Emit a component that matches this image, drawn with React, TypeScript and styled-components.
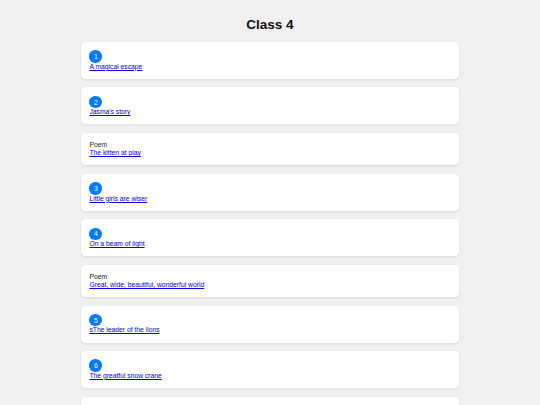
import React from "react";
import styled, { createGlobalStyle } from "styled-components";

type STORY = {
  kind: "lesson" | "poem";
  number?: number;
  title: string;
};

const stories: STORY[] = [
  { kind: "lesson", number: 1, title: "A magical escape" },
  { kind: "lesson", number: 2, title: "Jasma's story" },
  { kind: "poem", title: "The kitten at play" },
  { kind: "lesson", number: 3, title: "Little girls are wiser" },
  { kind: "lesson", number: 4, title: "On a beam of light" },
  { kind: "poem", title: "Great, wide, beautiful, wonderful world" },
  { kind: "lesson", number: 5, title: "sThe leader of the lions" },
  { kind: "lesson", number: 6, title: "The greatful snow crane" },
  { kind: "lesson", number: 7, title: "The ant and the grasshopper" },
];

const GlobalStyle = createGlobalStyle`
  html, body {
    margin: 0;
    background: #f0f0f0;
    font-family: "Liberation Sans", Arial, sans-serif;
  }
`;

const Page = styled.main`
  padding: 16.5px 0 20px;
  display: flex;
  flex-direction: column;
  align-items: center;
`;

const Title = styled.h1`
  margin: 0 0 10px;
  font-size: 13.5px;
  line-height: 15.5px;
  font-weight: bold;
  color: #111;
`;

const List = styled.ul`
  list-style: none;
  margin: 0;
  padding: 0;
  width: 378px;
  display: flex;
  flex-direction: column;
  gap: 8.5px;
`;

const Card = styled.li`
  background: #fff;
  border-radius: 4.5px;
  box-shadow: 0 1px 3px rgba(0, 0, 0, 0.1);
  padding: 8.4px;
  display: flex;
  flex-direction: column;
  align-items: flex-start;
`;

const Badge = styled.span`
  width: 12.8px;
  height: 12.4px;
  border-radius: 50%;
  background: #007bff;
  color: #fff;
  font-size: 6.75px;
  display: flex;
  align-items: center;
  justify-content: center;
`;

const Label = styled.span`
  font-size: 6.75px;
  line-height: 7.8px;
  color: #222;
`;

const StoryLink = styled.a`
  font-size: 6.75px;
  line-height: 7.8px;
  color: #0000ee;
  text-decoration: underline;
`;

export default function App(): JSX.Element {
  return (
    <>
      <GlobalStyle />
      <Page>
        <Title>Class 4</Title>
        <List>
          {stories.map((story, index) => {
            return (
              <Card key={index}>
                {story.kind === "poem" ? <Label>Poem</Label> : <Badge>{story.number}</Badge>}
                <StoryLink href="#">{story.title}</StoryLink>
              </Card>
            );
          })}
        </List>
      </Page>
    </>
  );
}
